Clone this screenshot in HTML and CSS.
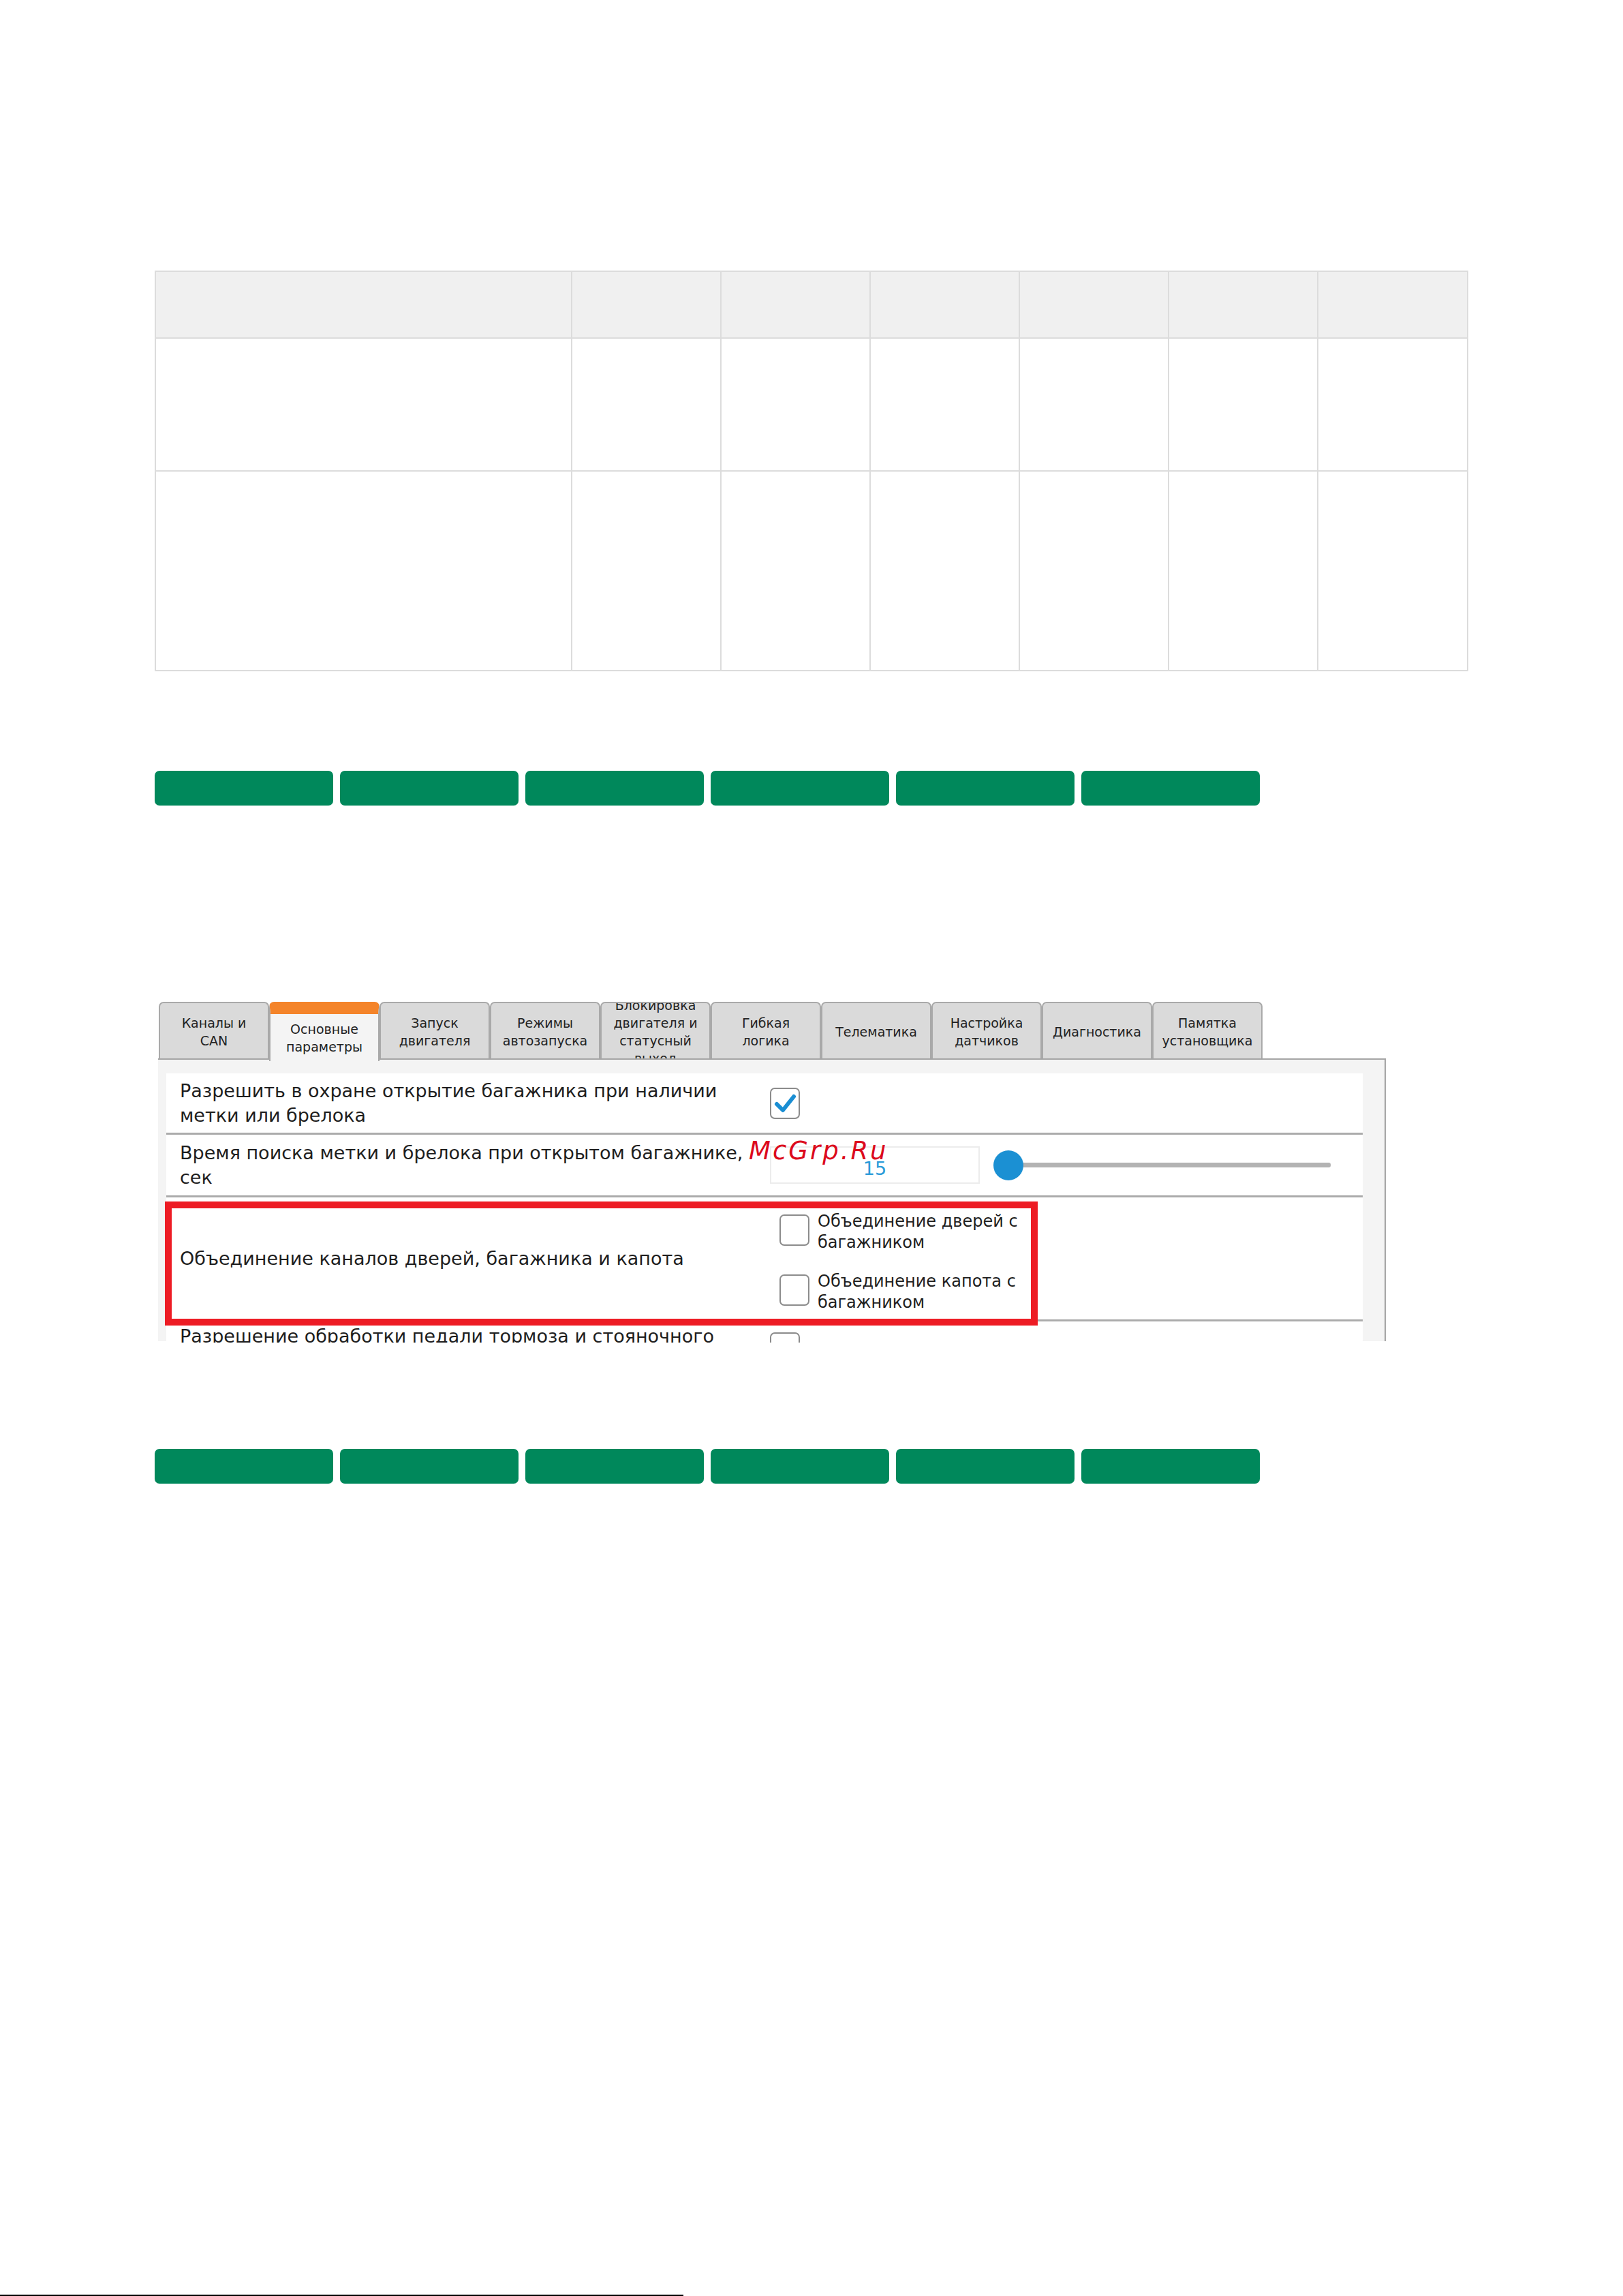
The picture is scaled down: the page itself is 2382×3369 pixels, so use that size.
FILE: index.html
```html
<!DOCTYPE html>
<html lang="ru">
<head>
<meta charset="UTF-8">
<title>Основные параметры</title>
<link rel="stylesheet" href="styles.css">
</head>
<body>
<div class="page">
  <table class="spec">
    <colgroup>
      <col class="c-wide"><col class="c-n"><col class="c-n"><col class="c-n"><col class="c-n"><col class="c-n"><col class="c-last">
    </colgroup>
    <tr class="head"><th></th><th></th><th></th><th></th><th></th><th></th><th></th></tr>
    <tr class="r1"><td></td><td></td><td></td><td></td><td></td><td></td><td></td></tr>
    <tr class="r2"><td></td><td></td><td></td><td></td><td></td><td></td><td></td></tr>
  </table>

  <div class="bars first">
    <span class="bar"></span><span class="bar"></span><span class="bar"></span>
    <span class="bar"></span><span class="bar"></span><span class="bar"></span>
  </div>

  <div class="shot">
    <div class="tabs">
      <div class="tab">Каналы и<br>CAN</div>
      <div class="tab active">Основные<br>параметры</div>
      <div class="tab">Запуск<br>двигателя</div>
      <div class="tab">Режимы<br>автозапуска</div>
      <div class="tab">Блокировка<br>двигателя и<br>статусный<br>выход</div>
      <div class="tab">Гибкая<br>логика</div>
      <div class="tab">Телематика</div>
      <div class="tab">Настройка<br>датчиков</div>
      <div class="tab">Диагностика</div>
      <div class="tab">Памятка<br>установщика</div>
    </div>
    <div class="panel">
      <div class="rows">
        <div class="row row-1">
          <div class="label">Разрешить в охране открытие багажника при наличии<br>метки или брелока</div>
          <div class="ctrl">
            <span class="check on">
              <svg width="40" height="42" viewBox="0 0 40 42"><path d="M8 22 L17 31 L33 11" fill="none" stroke="#1a8ed3" stroke-width="6" stroke-linecap="round" stroke-linejoin="round"/></svg>
            </span>
          </div>
        </div>
        <div class="row row-2">
          <div class="label">Время поиска метки и брелока при открытом багажнике,<br>сек</div>
          <div class="ctrl">
            <div class="num">15</div>
            <div class="slider">
              <div class="track"></div>
              <span class="thumb"></span>
            </div>
          </div>
        </div>
        <div class="row row-3">
          <div class="label">Объединение каналов дверей, багажника и капота</div>
          <div class="ctrl opts">
            <div class="opt"><span class="check"></span><span>Объединение дверей с<br>багажником</span></div>
            <div class="opt"><span class="check"></span><span>Объединение капота с<br>багажником</span></div>
          </div>
        </div>
        <div class="row row-4">
          <div class="label">Разрешение обработки педали тормоза и стояночного<br>тормоза</div>
          <div class="ctrl"><span class="check"></span></div>
        </div>
        <div class="hl"></div>
      </div>
      <div class="mark">McGrp.Ru</div>
    </div>
  </div>

  <div class="bars second">
    <span class="bar"></span><span class="bar"></span><span class="bar"></span>
    <span class="bar"></span><span class="bar"></span><span class="bar"></span>
  </div>
</div>
<div class="footline"></div>
</body>
</html>
```

FILE: styles.css
```css
html, body {
  margin: 0;
  padding: 0;
  background: #ffffff;
}

body {
  height: 3369px;
  overflow: hidden;
  display: flex;
  flex-direction: column;
  font-family: 'DejaVu Sans', 'Liberation Sans', sans-serif;
  color: #1e1e1e;
}

.page {
  padding: 397px 0 0 227px;
}

/* empty table at the top */
.spec {
  border-collapse: collapse;
  width: 1926px;
  table-layout: fixed;
}

.spec th, .spec td {
  border: 2px solid #dcdcdc;
  padding: 0;
}

.spec .head th {
  background-color: #f0f0f0;
}

.c-wide { width: 611px; }
.c-n { width: 219px; }
.c-last { width: 220px; }

.spec .head { height: 98px; }
.spec .r1 { height: 195px; }
.spec .r2 { height: 293px; }

/* green button bars */
.bars {
  display: flex;
  gap: 10px;
}

.bars.first { margin-top: 146px; }
.bars.second { margin-top: 156px; }

.bar {
  width: 262px;
  height: 51px;
  background-color: #00885b;
  border-radius: 7px;
}

/* software screenshot */
.shot {
  margin-top: 288px;
  margin-left: 5px;
  width: 1802px;
  height: 500px;
  overflow: hidden;
  position: relative;
}

.tabs {
  display: flex;
  height: 85px;
  padding-left: 1px;
}

.tab {
  width: 162px;
  box-sizing: border-box;
  background-color: #dadada;
  border: 2px solid #a9a9a9;
  border-bottom: none;
  border-radius: 7px 7px 0 0;
  display: flex;
  align-items: center;
  justify-content: center;
  text-align: center;
  font-size: 19px;
  line-height: 26px;
  color: #222;
  overflow: hidden;
}

.tab.active {
  background-color: #f4f4f4;
  border-top: 18px solid #f4842a;
  height: 87px;
  position: relative;
  z-index: 2;
}

.panel {
  height: 415px;
  background-color: #f4f4f4;
  border-top: 2px solid #a5a5a5;
  border-right: 2px solid #a5a5a5;
  box-sizing: border-box;
  margin-top: -2px;
  padding: 20px 32px 0 12px;
  position: relative;
}

.rows {
  background-color: #ffffff;
  position: relative;
}

.row {
  display: flex;
  align-items: center;
  border-bottom: 3px solid #ababab;
  box-sizing: border-box;
}

.row-1 { height: 90px; }
.row-2 { height: 92px; }
.row-3 { height: 182px; }
.row-4 { height: 92px; border-bottom: none; }

.label {
  width: 886px;
  padding-left: 20px;
  box-sizing: border-box;
  font-size: 27px;
  line-height: 36px;
  color: #1e1e1e;
}

.ctrl {
  display: flex;
  align-items: center;
}

.check {
  display: inline-flex;
  align-items: center;
  justify-content: center;
  width: 44px;
  height: 46px;
  box-sizing: border-box;
  border: 2px solid #8c8c8c;
  border-radius: 7px;
  background: #ffffff;
  flex-shrink: 0;
}

.num {
  width: 308px;
  height: 55px;
  box-sizing: border-box;
  border: 2px solid #ececec;
  display: flex;
  align-items: center;
  justify-content: center;
  font-size: 27px;
  color: #2a9bd9;
  padding-top: 10px;
}

.slider {
  width: 495px;
  height: 44px;
  margin-left: 20px;
  display: flex;
  align-items: center;
  position: relative;
}

.track {
  margin-left: 40px;
  width: 456px;
  height: 7px;
  background-color: #b3b3b3;
  border-radius: 3px;
}

.thumb {
  position: absolute;
  left: 0;
  top: 0;
  width: 44px;
  height: 44px;
  border-radius: 50%;
  background-color: #1b90d3;
}

.opts {
  flex-direction: column;
  align-items: flex-start;
  gap: 26px;
  padding-left: 14px;
  padding-top: 10px;
}

.opt {
  display: flex;
  align-items: flex-start;
  gap: 12px;
  font-size: 24px;
  line-height: 31px;
}

.opt .check {
  margin-top: 5px;
}

.row-4 .label {
  align-self: flex-start;
  padding-top: 4px;
}

.row-4 .ctrl {
  align-self: flex-start;
  padding-top: 16px;
}

/* red highlight drawn over the third row */
.hl {
  position: absolute;
  left: -2px;
  top: 188px;
  width: 1281px;
  height: 182px;
  border: 10px solid #ed1c24;
  box-sizing: border-box;
}

.mark {
  position: absolute;
  left: 867px;
  top: 112px;
  font-style: italic;
  font-size: 37px;
  letter-spacing: 3px;
  color: #dc0a1c;
  z-index: 3;
}

.footline {
  margin-top: auto;
  width: 1003px;
  height: 2px;
  background-color: #000000;
}
```
